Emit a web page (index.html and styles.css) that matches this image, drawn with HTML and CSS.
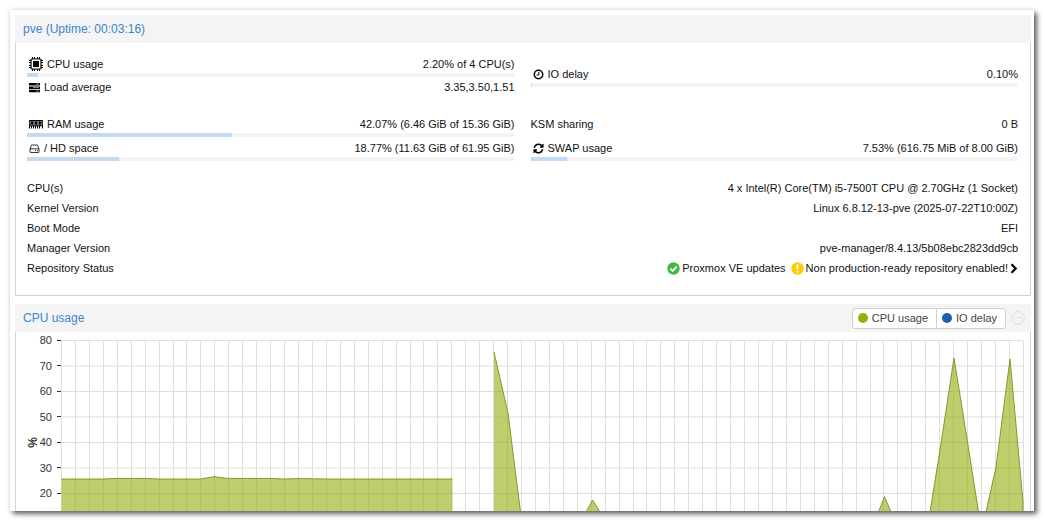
FILE: index.html
```html
<!DOCTYPE html>
<html lang="en">
<head>
<meta charset="utf-8">
<title>pve - Summary</title>
<link rel="stylesheet" href="styles.css">
</head>
<body>
<main class="window">
  <section class="panel">
    <header class="panel-header"><h2 class="panel-title">pve (Uptime: 00:03:16)</h2></header>
    <div class="panel-body status">
      <div class="gauges">
        <div class="stack load-stack">
          <div class="gauge">
            <div class="line">
              <span class="label"><svg class="icon-wide" viewBox="0 0 14 14"><path d="M3.500 0v14M5.500 0v14M8.500 0v14M10.500 0v14M0 3.500h14M0 5.500h14M0 8.500h14M0 10.500h14" stroke="#000" stroke-width="1"/><rect x="2" y="2" width="10" height="10" rx="1" fill="#fff" stroke="#000" stroke-width="1.200"/><rect x="4" y="4" width="6" height="6"/></svg>CPU usage</span>
              <span>2.20% of 4 CPU(s)</span>
            </div>
            <div class="bar"><div class="fill" style="width:2.2%"></div></div>
          </div>
          <div class="line load">
            <span class="label"><svg class="icon" viewBox="0 0 11 11"><path d="M0 1h11v2.500H0zM0 4.400h11v2.500H0zM0 7.800h11v2.500H0z"/><path d="M7 2.200h3M4 5.600h6M7 9h3" stroke="#aaa" stroke-width=".8"/></svg>Load average</span>
            <span>3.35,3.50,1.51</span>
          </div>
        </div>
        <div class="gauge">
          <div class="line">
            <span class="label"><svg class="icon" viewBox="0 0 11 11"><circle cx="5.500" cy="5.500" r="4.200" fill="none" stroke="#000" stroke-width="1.500"/><path d="M5.800 3v3H3.600" fill="none" stroke="#000"/></svg>IO delay</span>
            <span>0.10%</span>
          </div>
          <div class="bar"><div class="fill" style="width:0.1%"></div></div>
        </div>
        <div class="stack">
          <div class="gauge">
            <div class="line">
              <span class="label"><svg class="icon-wide" viewBox="0 0 14 14"><path d="M.5 3.500h13v1.700a1 1 0 0 0 0 1.600v2H.5v-2a1 1 0 0 0 0-1.600z" fill="#777" stroke="#000"/><path d="M2.200 4.500h2v3h-2zM6 4.500h2v3H6zM9.800 4.500h2v3h-2z"/><path d="M.5 9v2.500M2.500 9v2.500M4.500 9v2.500M6.500 9v2.500M8.500 9v2.500M10.500 9v2.500M13.500 9v2.500" stroke="#000"/></svg>RAM usage</span>
              <span>42.07% (6.46 GiB of 15.36 GiB)</span>
            </div>
            <div class="bar"><div class="fill" style="width:42.07%"></div></div>
          </div>
          <div class="gauge">
            <div class="line">
              <span class="label"><svg class="icon" viewBox="0 0 11 11"><path d="M1 5.800 2.500 2h6L10 5.800V9a.5.500 0 0 1-.5.500h-8A.5.500 0 0 1 1 9zM1 5.800h9" fill="none" stroke="#222" stroke-width=".9"/><path d="M6 7.700h1M8 7.700h1" stroke="#222"/></svg>/ HD space</span>
              <span>18.77% (11.63 GiB of 61.95 GiB)</span>
            </div>
            <div class="bar"><div class="fill" style="width:18.77%"></div></div>
          </div>
        </div>
        <div class="stack">
          <div class="gauge">
            <div class="line"><span>KSM sharing</span><span>0 B</span></div>
            <div class="bar-space"></div>
          </div>
          <div class="gauge">
            <div class="line">
              <span class="label"><svg class="icon" viewBox="-60 -60 1656 1656"><path d="M1511 928q0 5-1 7-64 268-268 434.500t-478 166.500q-146 0-282.500-55t-243.500-157l-129 129q-19 19-45 19t-45-19-19-45v-448q0-26 19-45t45-19h448q26 0 45 19t19 45-19 45l-137 137q71 66 161 102t187 36q134 0 250-65t186-179q11-17 53-117 8-23 30-23h192q13 0 22.500 9.500t9.500 22.500zm25-800v448q0 26-19 45t-45 19h-448q-26 0-45-19t-19-45 19-45l138-138q-148-137-349-137-134 0-250 65t-186 179q-11 17-53 117-8 23-30 23h-199q-13 0-22.500-9.500t-9.500-22.500v-7q65-268 270-434.500t480-166.500q146 0 284 55.500t245 156.500l130-129q19-19 45-19t45 19 19 45z"/></svg>SWAP usage</span>
              <span>7.53% (616.75 MiB of 8.00 GiB)</span>
            </div>
            <div class="bar"><div class="fill" style="width:7.53%"></div></div>
          </div>
        </div>
      </div>
      <dl class="facts">
        <div class="fact"><dt>CPU(s)</dt><dd>4 x Intel(R) Core(TM) i5-7500T CPU @ 2.70GHz (1 Socket)</dd></div>
        <div class="fact"><dt>Kernel Version</dt><dd>Linux 6.8.12-13-pve (2025-07-22T10:00Z)</dd></div>
        <div class="fact"><dt>Boot Mode</dt><dd>EFI</dd></div>
        <div class="fact"><dt>Manager Version</dt><dd>pve-manager/8.4.13/5b08ebc2823dd9cb</dd></div>
        <div class="fact"><dt>Repository Status</dt>
          <dd><a class="repo" href="#repositories">
            <svg class="badge" viewBox="0 0 13 13"><circle cx="6.500" cy="6.500" r="6.200" fill="#3dbb40"/><path d="m3.400 6.600 2.300 2.300 4-4.200" fill="none" stroke="#fff" stroke-width="1.900"/></svg>
            <span class="repo-text">Proxmox VE updates</span>
            <svg class="badge" viewBox="0 0 13 13"><circle cx="6.500" cy="6.500" r="6.200" fill="#fc0"/><path d="M6.500 2.400v5.200M6.500 8.700v1.900" stroke="#fff" stroke-width="1.800"/></svg>
            <span>Non production-ready repository enabled!</span>
            <svg class="chevron" viewBox="0 0 8 11"><path d="m1.500 1.300 4.200 4.200-4.200 4.200" fill="none" stroke="#000" stroke-width="2.200"/></svg>
          </a></dd></div>
      </dl>
    </div>
  </section>

  <section class="panel">
    <header class="panel-header">
      <h2 class="panel-title">CPU usage</h2>
      <div class="legend">
        <button class="series" type="button"><span class="dot dot-cpu"></span>CPU usage</button>
        <button class="series" type="button"><span class="dot dot-io"></span>IO delay</button>
      </div>
      <button class="undo" type="button" aria-label="Undo zoom"><svg class="undo-icon" viewBox="0 0 14 14"><circle cx="7" cy="7" r="6.300" fill="none" stroke="#d3e1ef"/><path d="M3 7h8" stroke="#d3e1ef"/></svg></button>
    </header>
    <div class="panel-body chart">
      <div class="axis-title">%</div>
      <div class="axis">
        <span class="tick">80</span><span class="tick">70</span><span class="tick">60</span><span class="tick">50</span><span class="tick">40</span><span class="tick">30</span><span class="tick">20</span>
      </div>
      <svg class="plot" viewBox="0 0 963 171" preserveAspectRatio="none">
        <path class="grid" transform="translate(.5 .5)" d="M0 0V171M14 0V171M28 0V171M42 0V171M56 0V171M70 0V171M84 0V171M98 0V171M112 0V171M125 0V171M139 0V171M153 0V171M167 0V171M181 0V171M195 0V171M209 0V171M223 0V171M237 0V171M251 0V171M265 0V171M279 0V171M293 0V171M307 0V171M321 0V171M335 0V171M349 0V171M362 0V171M376 0V171M390 0V171M404 0V171M418 0V171M432 0V171M446 0V171M460 0V171M474 0V171M488 0V171M502 0V171M516 0V171M530 0V171M544 0V171M558 0V171M572 0V171M585 0V171M599 0V171M613 0V171M627 0V171M641 0V171M655 0V171M669 0V171M683 0V171M697 0V171M711 0V171M725 0V171M739 0V171M753 0V171M767 0V171M781 0V171M795 0V171M809 0V171M822 0V171M836 0V171M850 0V171M864 0V171M878 0V171M892 0V171M906 0V171M920 0V171M934 0V171M948 0V171M962 0V171"/>
        <path class="grid" transform="translate(0 .5)" d="M0 0H962M0 25.500H962M0 51H962M0 76.500H962M0 102H962M0 127.500H962M0 153H962"/>
        <path class="area" d="M.5 171V139H42L56 138.400H84L98 139H139L153 136.700 167 138.400H209L223 139 237 138.600 265 139H391.500V171zM433 171V12L447 73 459.500 171zM525.500 171 531.500 160 538.500 171zM818 171 823.500 156.500 829.500 171zM869 171 879 110 893 18 907 105 917.500 171zM925 171 935 127 949 19 962 162V171z"/>
        <path class="stroke" d="M.5 139H42L56 138.400H84L98 139H139L153 136.700 167 138.400H209L223 139 237 138.600 265 139H391.500M433 12 447 73 459.500 172M525 172 531.500 160 539 172M817.500 172 823.500 156.500 830 172M869 172 879 110 893 18 907 105 917.500 172M925 172 935 127 949 19 962 162V171"/>
      </svg>
    </div>
  </section>
</main>
</body>
</html>
```
FILE: styles.css
```css
* { box-sizing: border-box; }

body {
  margin: 0;
  padding: 10px 11px 11px 10px;
  background: #fff;
  color: #111;
  font: 11px/16px "Liberation Sans", Arial, sans-serif;
  overflow: hidden;
}

.window {
  display: flex;
  flex-direction: column;
  gap: 8px;
  padding: 5px 3px 0 5px;
  background: #fff;
  box-shadow: 3px 3px 5px rgba(0, 0, 0, .6), 0 0 4px rgba(0, 0, 0, .15);
}

.panel-header {
  display: flex;
  align-items: center;
  height: 28px;
  padding: 0 6px 0 8px;
  background: #f4f4f4;
}

.panel-title {
  flex: 1;
  margin: 0;
  color: #3b86cf;
  font-size: 12px;
  font-weight: normal;
}

.panel-body {
  border: solid #d3d3d3;
  border-width: 0 1px 1px;
}

.status { padding: 13px 12px 17px 11px; }

.gauges {
  display: grid;
  grid-template-columns: 1fr 1fr;
  align-items: center;
  gap: 19px 16px;
}

.stack {
  display: flex;
  flex-direction: column;
  gap: 3px;
}

.load-stack { gap: 2px; }
.load { padding-bottom: 2px; }

.line {
  display: flex;
  justify-content: space-between;
}

.label {
  display: flex;
  align-items: center;
  gap: 4px;
  padding-left: 2px;
}

.icon { width: 11px; height: 11px; }
.icon-wide { width: 14px; height: 14px; }

.bar {
  height: 4px;
  margin-top: 1px;
  background: #f4f4f4;
}

.bar-space { height: 5px; }

.fill {
  height: 100%;
  background: #c2dbf1;
}

.facts { margin: 17px 0 0; }

.fact {
  display: flex;
  justify-content: space-between;
  line-height: 20px;
}

.fact dd { margin: 0; }

.repo {
  display: flex;
  align-items: center;
  gap: 2px;
  color: inherit;
  text-decoration: none;
}

.repo-text { margin-right: 3px; }
.badge { width: 13px; height: 13px; }
.chevron { width: 8px; height: 11px; }

.legend {
  display: flex;
  border: 1px solid #d0d0d0;
  border-radius: 3px;
  background: #fff;
}

.series {
  display: flex;
  align-items: center;
  gap: 4px;
  height: 19px;
  padding: 0 8px 0 5px;
  border: 0;
  background: none;
  color: #444;
  font: inherit;
}

.series + .series { border-left: 1px solid #d0d0d0; }

.dot {
  width: 10px;
  height: 10px;
  border-radius: 50%;
}

.dot-cpu { background: #94ae0a; }
.dot-io { background: #1f5fa9; }

.undo {
  display: flex;
  margin-left: 5px;
  padding: 0;
  border: 0;
  background: none;
}

.undo-icon { width: 14px; height: 14px; }

.chart {
  display: flex;
  padding-right: 6px;
  border-bottom: 0;
}

.axis-title {
  width: 12px;
  margin: 105px 0 0 11px;
  color: #333;
  font-weight: bold;
  font-size: 12px;
  line-height: 12px;
  writing-mode: vertical-rl;
  transform: rotate(180deg);
  align-self: flex-start;
}

.axis {
  display: flex;
  flex-direction: column;
  justify-content: space-between;
  width: 22px;
  height: 169px;
  color: #333;
}

.tick {
  display: flex;
  align-items: center;
  justify-content: flex-end;
  gap: 5px;
}

.tick::after {
  content: "";
  width: 4px;
  height: 1px;
  background: #333;
}

.plot {
  flex: 1;
  min-width: 0;
  height: 171px;
  margin-top: 8px;
}

.grid {
  fill: none;
  stroke: #dedede;
}

.area {
  fill: #94ae0a;
  fill-opacity: .6;
}

.stroke {
  fill: none;
  stroke: #7c9020;
  stroke-opacity: .9;
}
```
